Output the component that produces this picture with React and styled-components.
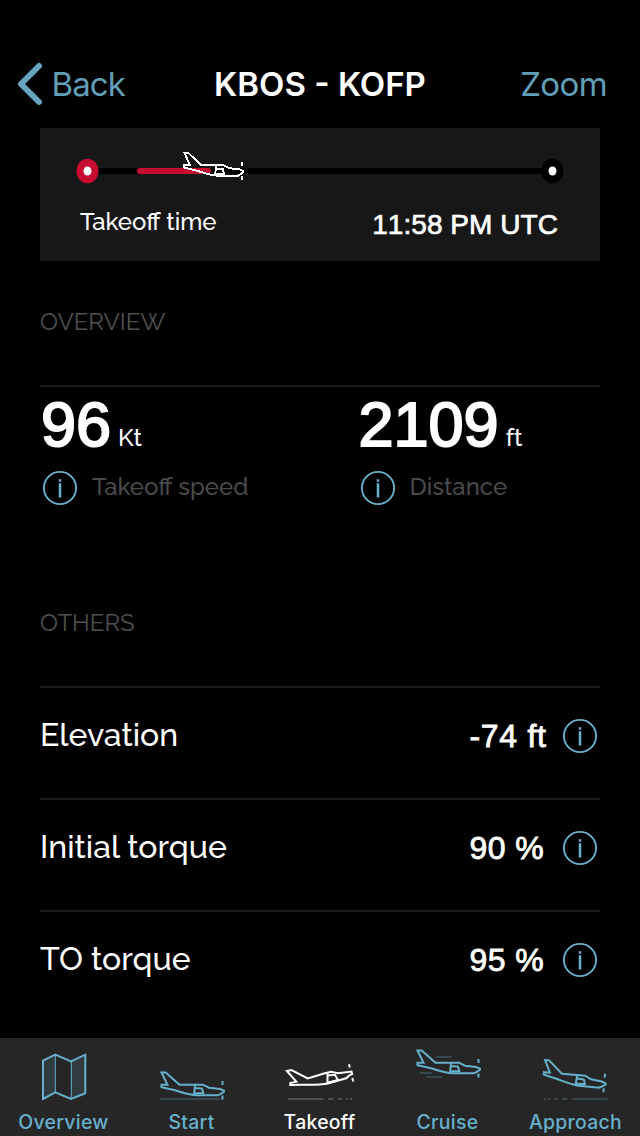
import React from "react";
import styled, { createGlobalStyle } from "styled-components";

const GlobalStyle = createGlobalStyle`
  * {
    box-sizing: border-box;
  }
  body {
    margin: 0;
    background: #000;
  }
`

const body = '"Raleway", "Lato", sans-serif'
const numeric = '"Liberation Sans", Arial, sans-serif'
const system = '"Inter", sans-serif'

const Screen = styled.div`
  width: 640px;
  height: 1136px;
  display: flex;
  flex-direction: column;
  background-color: #000;
  color: #fff;
  font-family: ${body};
  font-weight: 500;
  overflow: hidden;
  white-space: nowrap;
`

const NavBar = styled.header`
  height: 128px;
  padding: 40px 16px 0;
  display: grid;
  grid-template-columns: 1fr auto 1fr;
  align-items: center;
  font-family: ${system};
  font-size: 33px;
`

const NavAction = styled.button`
  display: flex;
  align-items: center;
  justify-self: ${({ $end }) => ($end ? 'end' : 'start')};
  gap: 8.5px;
  margin-right: ${({ $end }) => ($end ? '17px' : '0')};
  padding: 0;
  border: none;
  background: none;
  color: #619fb9;
  font: inherit;
  font-weight: 400;
  letter-spacing: ${({ $end }) => ($end ? '-0.6px' : '-0.9px')};
  cursor: pointer;
`

const NavTitle = styled.h1`
  margin: 0;
  font-size: 33px;
  font-weight: 600;
  letter-spacing: 0;
`

const Content = styled.main`
  flex: 1;
  padding: 0 40px;
  display: flex;
  flex-direction: column;
`

const FlightCard = styled.section`
  height: 133px;
  background-color: #171717;
`

const Track = styled.svg`
  display: block;
  width: 560px;
  height: 66px;
`

const CardRow = styled.div`
  height: 60px;
  padding: 0 42px 0 40px;
  display: flex;
  justify-content: space-between;
  align-items: center;
`

const CardLabel = styled.span`
  margin-bottom: 4px;
  font-size: 24px;
  line-height: 30px;
`

const CardValue = styled.span`
  margin-top: 2px;
  font-family: ${numeric};
  font-size: 28px;
  font-weight: 400;
  font-kerning: none;
  line-height: 32px;
  letter-spacing: 0.05px;
  -webkit-text-stroke: 0.7px #fff;
`

const SectionTitle = styled.h2`
  margin: 0;
  height: 124px;
  padding-top: 46px;
  color: #505050;
  font-size: 24px;
  font-weight: 400;
  line-height: 30px;
  text-transform: uppercase;
`

const Stats = styled.section`
  height: 177px;
  padding-top: 6px;
  border-top: 2px solid #1a1a1a;
  display: grid;
  grid-template-columns: 317.5px 1fr;
`

const StatValue = styled.div`
  height: 64px;
  padding-left: 1px;
  display: flex;
  align-items: baseline;
  gap: 7px;
`

const StatNumber = styled.span`
  margin-top: -1px;
  font-family: ${numeric};
  font-size: 63px;
  font-weight: 400;
  font-kerning: none;
  line-height: 64px;
  -webkit-text-stroke: 2px #fff;
`

const StatUnit = styled.span`
  font-size: 24px;
`

const StatLabel = styled.div`
  margin-top: 13px;
  height: 36px;
  padding-left: 2px;
  display: flex;
  align-items: center;
  gap: 14px;
  color: #4a4a4a;
  font-size: 24px;
  line-height: 30px;

  span {
    margin-bottom: 2px;
  }
`

const Row = styled.div`
  height: 112px;
  padding: 0 2px 14px 0;
  border-top: 2px solid #1a1a1a;
  display: flex;
  align-items: center;
`

const RowLabel = styled.span`
  flex: 1;
  margin-bottom: 2px;
  font-size: 32px;
  line-height: 40px;
`

const RowValue = styled.span`
  width: 92.5px;
  font-family: ${numeric};
  font-size: 32px;
  font-weight: 400;
  font-kerning: none;
  line-height: 36px;
  letter-spacing: ${({ $spacing }) => $spacing};
  -webkit-text-stroke: 0.8px #fff;
`

const TabBar = styled.nav`
  height: 98px;
  display: grid;
  grid-template-columns: repeat(5, 128px);
  background-color: #262626;
`

const Tab = styled.button`
  padding: 8px 0 0;
  border: none;
  background: none;
  display: flex;
  flex-direction: column;
  align-items: center;
  color: ${({ $active }) => ($active ? '#fff' : '#67b0cb')};
  font-family: ${system};
  font-size: 19.4px;
  font-weight: 500;
  line-height: 24px;
  letter-spacing: 0.3px;
  cursor: pointer;

  svg {
    display: block;
    margin-bottom: 4px;
    overflow: visible;
  }
  span {
    margin-right: 1px;
  }
`

function Plane({ transform, ...rest }) {
  return (
    <g transform={transform} fill="none" stroke="currentColor" strokeWidth="2" {...rest}>
      <path d="M1.5 1.5H5.7L19.5 13.7H43L49 16.7L60 18L64 19.7V20.8L61.5 22.3L58 24.3H37C28 23.6 21 20.8 13 18.8L1.5 16.2V13.7H7.5Z" />
      <path d="M34 24L35 14M35.5 17L42 17.6L43.3 22.3H34.5" />
      <path d="M62.5 10V14M62.5 24.5V28.5" />
    </g>
  )
}

function InfoIcon() {
  return (
    <svg width="36" height="36" viewBox="0 0 36 36" fill="none" stroke="#67b0cb">
      <circle cx="18" cy="18" r="16.1" strokeWidth="1.9" />
      <path d="M18 9.2V11.8M18 13.2V27.6" strokeWidth="2.5" />
    </svg>
  )
}

function FlightTrack() {
  return (
    <Track viewBox="0 0 560 66">
      <rect x="48" y="40" width="464" height="6" fill="#000" />
      <rect x="97" y="40" width="74" height="6" rx="3" fill="#c60c30" />
      <ellipse cx="47.5" cy="43" rx="11" ry="12.3" fill="#c60c30" />
      <ellipse cx="47.5" cy="43" rx="4" ry="4.5" fill="#fff" />
      <ellipse cx="512.5" cy="43" rx="11" ry="12.3" fill="#000" />
      <ellipse cx="512.5" cy="43" rx="4" ry="4.5" fill="#fff" />
      <Plane transform="translate(143 23.5) scale(0.945 1)" shapeRendering="crispEdges" />
    </Track>
  )
}

const icons = {
  overview: (
    <>
      <path d="M14.7 14.7L27.3 8.7V46.3L14.7 53ZM43 15.3L57.7 8.3V47.3L43 53Z" fill="#303a3f" />
      <path d="M27.3 9V46.3M43.3 15.3V53" fill="none" stroke="currentColor" strokeWidth="1" />
      <path d="M15 14.7L27.3 8.7L43 15.3L57.3 8.7V47.3L43 53L27.3 46.3L15 53Z" fill="none" stroke="currentColor" strokeWidth="2" />
    </>
  ),
  start: (
    <>
      <Plane transform="translate(4 25)" />
      <path d="M4 53H64" stroke="#37474f" strokeWidth="2" />
    </>
  ),
  takeoff: (
    <>
      <g fill="none" stroke="currentColor" strokeWidth="2">
        <path d="M2.9 25L7.5 24L23.7 32.5L40 27.5L47 25.8L54 27.3L67.5 25.5L68.2 28L65 29.5L62.7 32L52 35.2L44 37.5C32 39.8 20 38.2 6.3 39V37L12.3 35.7Z" />
        <path d="M43.5 27V37.5M43.5 29.5L51 28.7L54 34L44.5 36.5" />
        <path d="M65 18.2L65.8 21.6M68.3 32L69.2 35.4" />
      </g>
      <path d="M4 53H39.5M44 53H49.5M54 53H58M61.7 53H63.5M66 53H68" stroke="#505050" strokeWidth="2" />
    </>
  ),
  cruise: (
    <>
      <Plane transform="translate(4 3)" />
      <path d="M24 11H40M8 27H20M14 31H30" stroke="#37474f" strokeWidth="2" />
    </>
  ),
  approach: (
    <>
      <Plane transform="translate(3.5 12.5) rotate(5 1.5 1.5)" />
      <path d="M4 53H5.7M7.7 53H10M14 53H17.5M22 53H27.5M32.3 53H67.5" stroke="#37474f" strokeWidth="2" />
    </>
  ),
}

const rows = [
  { label: 'Elevation', value: '-74 ft', spacing: '0.7px' },
  { label: 'Initial torque', value: '90 %', spacing: '0.4px' },
  { label: 'TO torque', value: '95 %', spacing: '0.4px' },
]

const tabs = [
  { id: 'overview', label: 'Overview' },
  { id: 'start', label: 'Start' },
  { id: 'takeoff', label: 'Takeoff' },
  { id: 'cruise', label: 'Cruise' },
  { id: 'approach', label: 'Approach' },
]

function Stat({ value, unit, label }) {
  return (
    <div>
      <StatValue>
        <StatNumber>{value}</StatNumber>
        <StatUnit>{unit}</StatUnit>
      </StatValue>
      <StatLabel>
        <InfoIcon />
        <span>{label}</span>
      </StatLabel>
    </div>
  )
}

export default function App() {
  return <Screen>
    <GlobalStyle />
    <NavBar>
      <NavAction>
        <svg width="27" height="44" viewBox="0 0 27 44" fill="none">
          <path d="M23 4L5 22L23 40" stroke="#66a5bf" strokeWidth="6" strokeLinecap="round" strokeLinejoin="round" />
        </svg>
        Back
      </NavAction>
      <NavTitle>KBOS - KOFP</NavTitle>
      <NavAction $end>Zoom</NavAction>
    </NavBar>
    <Content>
      <FlightCard>
        <FlightTrack />
        <CardRow>
          <CardLabel>Takeoff time</CardLabel>
          <CardValue>11:58 PM UTC</CardValue>
        </CardRow>
      </FlightCard>
      <SectionTitle>Overview</SectionTitle>
      <Stats>
        <Stat value="96" unit="Kt" label="Takeoff speed" />
        <Stat value="2109" unit="ft" label="Distance" />
      </Stats>
      <SectionTitle>Others</SectionTitle>
      {rows.map((row) => (
        <Row key={row.label}>
          <RowLabel>{row.label}</RowLabel>
          <RowValue $spacing={row.spacing}>{row.value}</RowValue>
          <InfoIcon />
        </Row>
      ))}
    </Content>
    <TabBar>
      {tabs.map((tab) => (
        <Tab key={tab.id} $active={tab.id === 'takeoff'}>
          <svg width="72" height="60" viewBox="0 0 72 60">{icons[tab.id]}</svg>
          <span>{tab.label}</span>
        </Tab>
      ))}
    </TabBar>
  </Screen>
}
